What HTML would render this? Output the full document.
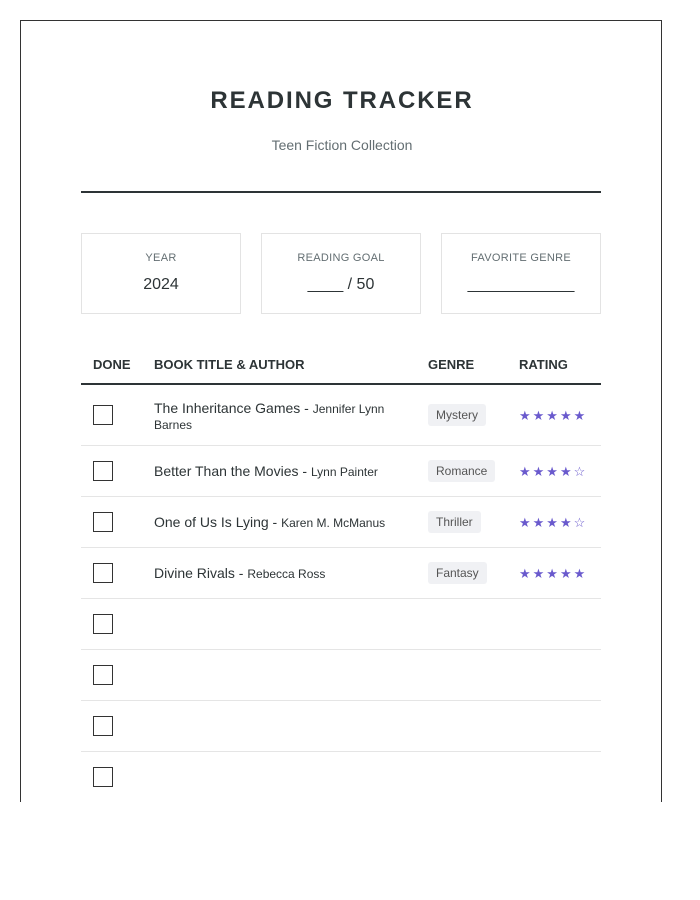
<!DOCTYPE html>
<html><head><meta charset="utf-8"><style>
*{margin:0;padding:0;box-sizing:border-box}
body{width:700px;height:900px;background:#fff;font-family:"Liberation Sans",Arial,sans-serif;color:#2d3436;position:relative;overflow:hidden}
.frame{position:absolute;left:20px;top:20px;width:642px;height:782px;border:1px solid #333;border-bottom:none;overflow:hidden}
h1{position:absolute;left:0;width:642px;top:66px;text-align:center;font-size:24px;letter-spacing:1.9px;font-weight:bold;color:#2d3436}
.sub{position:absolute;left:0;width:642px;top:116px;text-align:center;font-size:14px;color:#636e72}
.rule{position:absolute;left:60px;width:520px;top:170px;height:2px;background:#2d3436}
.box{position:absolute;top:212px;width:160px;height:81px;border:1px solid #e3e3e3;text-align:center}
.box .l{margin-top:18px;font-size:11px;color:#636e72;letter-spacing:.3px}
.box .v{margin-top:12px;font-size:16px;color:#2d3436}
.th{position:absolute;top:336px;font-size:13px;font-weight:bold;color:#2d3436}
.hl{position:absolute;left:60px;width:520px;top:362px;height:2px;background:#2d3436}
.row{position:absolute;left:60px;width:520px;border-bottom:1px solid #e5e5e5}
.cb{position:absolute;left:12px;width:20px;height:20px;border:1px solid #333}
.t{position:absolute;left:73px;font-size:14px;color:#2d3436;width:250px;line-height:15px}
.t small{font-size:12px}
.g{position:absolute;left:347px;font-size:12px;color:#555;background:#f0f1f4;border-radius:3px;padding:4px 8px}
.s{position:absolute;left:438px;font-size:13px;color:#6a5acd;letter-spacing:2px}
</style></head><body>
<div class="frame">
<h1>READING TRACKER</h1>
<div class="sub">Teen Fiction Collection</div>
<div class="rule"></div>
<div class="box" style="left:60px"><div class="l">YEAR</div><div class="v">2024</div></div>
<div class="box" style="left:240px"><div class="l">READING GOAL</div><div class="v">____ / 50</div></div>
<div class="box" style="left:420px"><div class="l">FAVORITE GENRE</div><div class="v">____________</div></div>
<div class="th" style="left:72px">DONE</div>
<div class="th" style="left:133px">BOOK TITLE &amp; AUTHOR</div>
<div class="th" style="left:407px">GENRE</div>
<div class="th" style="left:498px">RATING</div>
<div class="hl"></div>

<div class="row" style="top:364px;height:61px"><div class="cb" style="top:20px"></div><div class="t" style="top:16px">The Inheritance Games - <small>Jennifer Lynn Barnes</small></div><div class="g" style="top:19px">Mystery</div><div class="s" style="top:23px">★★★★★</div></div>
<div class="row" style="top:425px;height:51px"><div class="cb" style="top:15px"></div><div class="t" style="top:18px">Better Than the Movies - <small>Lynn Painter</small></div><div class="g" style="top:14px">Romance</div><div class="s" style="top:18px">★★★★☆</div></div>
<div class="row" style="top:476px;height:51px"><div class="cb" style="top:15px"></div><div class="t" style="top:18px">One of Us Is Lying - <small>Karen M. McManus</small></div><div class="g" style="top:14px">Thriller</div><div class="s" style="top:18px">★★★★☆</div></div>
<div class="row" style="top:527px;height:51px"><div class="cb" style="top:15px"></div><div class="t" style="top:18px">Divine Rivals - <small>Rebecca Ross</small></div><div class="g" style="top:14px">Fantasy</div><div class="s" style="top:18px">★★★★★</div></div>
<div class="row" style="top:578px;height:51px"><div class="cb" style="top:15px"></div></div>
<div class="row" style="top:629px;height:51px"><div class="cb" style="top:15px"></div></div>
<div class="row" style="top:680px;height:51px"><div class="cb" style="top:15px"></div></div>
<div class="row" style="top:731px;height:51px"><div class="cb" style="top:15px"></div></div>
</div>
</body></html>
